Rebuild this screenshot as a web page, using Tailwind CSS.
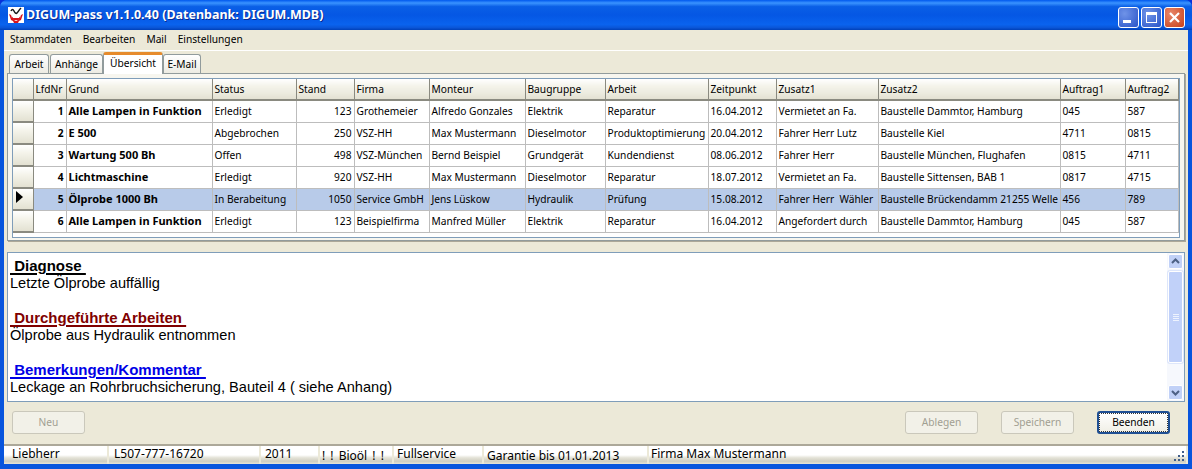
<!DOCTYPE html>
<html lang="de">
<head>
<meta charset="UTF-8" />
<title>DIGUM-pass</title>
<script src="https://cdn.jsdelivr.net/npm/@tailwindcss/browser@4"></script>
</head>
<body class="overflow-hidden bg-[#0831d9]">
  <!-- Fenster -->
  <div class="w-[1192px] h-[469px] flex flex-col bg-[#0855dd] font-['Noto_Sans','Liberation_Sans',sans-serif] text-[10.2px] text-black rounded-t-[7px] overflow-hidden">

    <!-- Titelleiste -->
    <div class="h-[30px] shrink-0 flex items-center pl-[8px] pr-[7px] bg-[linear-gradient(180deg,#0058ee_0%,#3a93ff_10%,#0a5fe6_22%,#0557e4_50%,#0a63ee_82%,#0a56d8_92%,#0040b8_100%)]">
      <svg width="16" height="16" viewBox="0 0 16 16" class="shrink-0">
        <rect width="16" height="16" fill="#fff"/>
        <path d="M1 7l2 1 0 2 2 1 1 2 2 1 2-1 1-2 2-1 0-2 2-1-1 3-1 3-2 1-1 2H6l-1-2-2-1-1-3z" fill="#d8141c"/>
        <path d="M3 8l2 3h6l2-3-1 4-2 1H6l-2-1z" fill="#d8141c"/>
        <path d="M3 4c1-2 2-2 3 0s2 3 3 2 2-3 4-5" stroke="#1a1a1a" stroke-width="1.5" fill="none"/>
      </svg>
      <span class="ml-[2px] font-bold text-[12.5px] text-white [text-shadow:1px_1px_0_#0a2a90]">DIGUM-pass v1.1.0.40 (Datenbank: DIGUM.MDB)</span>
      <div class="ml-auto mt-[5px] flex gap-[2px]">
        <div class="w-[21px] h-[21px] rounded-[3px] border border-white bg-[radial-gradient(circle_at_30%_30%,#6f93e8,#2a55c8)] relative">
          <div class="absolute left-[4px] bottom-[4px] w-[8px] h-[3px] bg-white"></div>
        </div>
        <div class="w-[21px] h-[21px] rounded-[3px] border border-white bg-[radial-gradient(circle_at_30%_30%,#6f93e8,#2a55c8)] flex items-center justify-center">
          <div class="w-[11px] h-[11px] border border-white border-t-[3px]"></div>
        </div>
        <div class="w-[21px] h-[21px] rounded-[3px] border border-white bg-[radial-gradient(circle_at_30%_30%,#e8876a,#c8401a)] flex items-center justify-center">
          <svg width="13" height="13" viewBox="0 0 13 13"><path d="M2 2l9 9M11 2l-9 9" stroke="#fff" stroke-width="2.2"/></svg>
        </div>
      </div>
    </div>

    <!-- Inhalt -->
    <div class="flex-1 min-h-0 mx-[4px] flex flex-col bg-[#ece9d8]">
      <!-- Menü -->
      <div class="h-[20px] shrink-0 flex items-center gap-[11px] pl-[6px] border-b border-white box-content">
        <span>Stammdaten</span><span>Bearbeiten</span><span>Mail</span><span>Einstellungen</span>
      </div>

      <!-- Tabs -->
      <div class="h-[22px] shrink-0 flex items-end pl-[5px] gap-[1px]">
        <div class="h-[19px] w-[40px] pt-[2px] flex items-center justify-center border border-b-0 border-[#919b9c] rounded-t-[3px] bg-[linear-gradient(180deg,#fff,#ecebe3)]">Arbeit</div>
        <div class="h-[19px] w-[53px] pt-[2px] flex items-center justify-center border border-b-0 border-[#919b9c] rounded-t-[3px] bg-[linear-gradient(180deg,#fff,#ecebe3)]">Anhänge</div>
        <div class="h-[22px] w-[60px] -ml-[1px] pb-[2px] flex items-center justify-center border-x border-[#919b9c] border-t-[3px] border-t-[#e68b2c] rounded-t-[3px] bg-white relative z-10 -mb-[1px]">Übersicht</div>
        <div class="h-[19px] w-[38px] -ml-[1px] pt-[2px] flex items-center justify-center border border-b-0 border-[#919b9c] rounded-t-[3px] bg-[linear-gradient(180deg,#fff,#ecebe3)]">E-Mail</div>
      </div>

      <!-- Tab-Seite mit Tabelle -->
      <div class="h-[168px] shrink-0 mx-[3px] border border-[#919b9c] bg-[#f7f6ef] p-[4px] pb-[3px] shadow-[1px_1px_0_#aca899]">
        <div class="h-[160px] border border-[#7f9db9] bg-white overflow-hidden">
          <table class="table-fixed border-collapse w-[1165px] leading-[13px]">
            <colgroup>
              <col class="w-[20px]"><col class="w-[33px]"><col class="w-[146px]"><col class="w-[84px]"><col class="w-[58px]"><col class="w-[75px]"><col class="w-[96px]"><col class="w-[80px]"><col class="w-[103px]"><col class="w-[68px]"><col class="w-[102px]"><col class="w-[182px]"><col class="w-[65px]"><col class="w-[53px]">
            </colgroup>
            <thead id="kopf"></thead>
            <tbody id="zeilen"></tbody>
          </table>
        </div>
      </div>

      <!-- Textfeld mit Scrollbar -->
      <div class="h-[150px] shrink-0 mt-[11px] mx-[3px] border border-[#7f9db9] bg-white flex">
        <div class="flex-1 pl-[2px] pt-[4px] font-['Liberation_Sans',sans-serif] text-[14.6px] leading-[17px]">
          <div class="h-[18px] text-[15px] font-bold"><span class="underline decoration-2 underline-offset-2 whitespace-pre"> Diagnose </span></div>
          <div class="h-[34px]">Letzte Ölprobe auffällig</div>
          <div class="h-[18px] text-[15px] font-bold text-[#800000]"><span class="underline decoration-2 underline-offset-2 whitespace-pre"> Durchgeführte Arbeiten </span></div>
          <div class="h-[34px]">Ölprobe aus Hydraulik entnommen</div>
          <div class="h-[18px] text-[15px] font-bold text-[#0000e6]"><span class="underline decoration-2 underline-offset-2 whitespace-pre"> Bemerkungen/Kommentar </span></div>
          <div>Leckage an Rohrbruchsicherung, Bauteil 4 ( siehe Anhang)</div>
        </div>
        <div class="w-[17px] shrink-0 flex flex-col bg-[#f6f8fd] items-center">
          <div class="w-[15px] h-[15px] mt-[1px] rounded-[2px] border border-white bg-[#c1d1f7] flex items-center justify-center">
            <svg width="9" height="7" viewBox="0 0 9 7"><path d="M1 5l3.5-3.5L8 5" stroke="#4d6185" stroke-width="2" fill="none"/></svg>
          </div>
          <div class="w-[15px] h-[92px] mt-[2px] rounded-[2px] border border-white bg-[#c1d1f9] flex flex-col items-center justify-center gap-[1px] shadow-[0_0_0_1px_#dde6fb]">
            <div class="w-[6px] h-[1px] bg-[#eef3fe]"></div><div class="w-[6px] h-[1px] bg-[#eef3fe]"></div><div class="w-[6px] h-[1px] bg-[#eef3fe]"></div><div class="w-[6px] h-[1px] bg-[#eef3fe]"></div>
          </div>
          <div class="w-[15px] h-[15px] mt-auto mb-[1px] rounded-[2px] border border-white bg-[#c1d1f7] flex items-center justify-center">
            <svg width="9" height="7" viewBox="0 0 9 7"><path d="M1 2l3.5 3.5L8 2" stroke="#4d6185" stroke-width="2" fill="none"/></svg>
          </div>
        </div>
      </div>

      <!-- Schaltflächen -->
      <div class="flex-1 min-h-0 flex items-start pt-[9px] pl-[8px] pr-[18px] border-b-2 border-[#aca899]">
        <button class="w-[73px] h-[23px] rounded-[3px] border border-[#cac8bb] bg-[#f2f1e8] text-[#a19f92]">Neu</button>
        <button class="ml-auto w-[73px] h-[23px] rounded-[3px] border border-[#cac8bb] bg-[#f2f1e8] text-[#a19f92]">Ablegen</button>
        <button class="ml-[23px] w-[73px] h-[23px] rounded-[3px] border border-[#cac8bb] bg-[#f2f1e8] text-[#a19f92]">Speichern</button>
        <button class="ml-[23px] w-[73px] h-[23px] rounded-[3px] border-2 border-[#1f4f93] bg-[linear-gradient(180deg,#fff,#f0efe6)] outline-1 outline-dotted -outline-offset-3 outline-[#333]">Beenden</button>
      </div>

      <!-- Statusleiste -->
      <div class="h-[18px] shrink-0 flex relative">
        <div id="status" class="flex w-full bg-[#ece9d8] text-[12px] leading-[14px]"></div>
        <svg width="12" height="12" viewBox="0 0 12 12" class="absolute right-[3px] bottom-[2px]">
          <path d="M9 1h2v2H9zM5 5h2v2H5zM9 5h2v2H9zM1 9h2v2H1zM5 9h2v2H5zM9 9h2v2H9z" fill="#3f5d8a"/>
        </svg>
      </div>
    </div>
    <div class="h-[5px] shrink-0"></div>
  </div>

  <script>
    // Spaltenkopf
    const spalten = ['', 'LfdNr', 'Grund', 'Status', 'Stand', 'Firma', 'Monteur', 'Baugruppe', 'Arbeit', 'Zeitpunkt', 'Zusatz1', 'Zusatz2', 'Auftrag1', 'Auftrag2'];

    const daten = [
      ['1', 'Alle Lampen in Funktion', 'Erledigt', '123', 'Grothemeier', 'Alfredo Gonzales', 'Elektrik', 'Reparatur', '16.04.2012', 'Vermietet an Fa.', 'Baustelle Dammtor, Hamburg', '045', '587'],
      ['2', 'E 500', 'Abgebrochen', '250', 'VSZ-HH', 'Max Mustermann', 'Dieselmotor', 'Produktoptimierung', '20.04.2012', 'Fahrer Herr Lutz', 'Baustelle Kiel', '4711', '0815'],
      ['3', 'Wartung 500 Bh', 'Offen', '498', 'VSZ-München', 'Bernd Beispiel', 'Grundgerät', 'Kundendienst', '08.06.2012', 'Fahrer Herr', 'Baustelle München, Flughafen', '0815', '4711'],
      ['4', 'Lichtmaschine', 'Erledigt', '920', 'VSZ-HH', 'Max Mustermann', 'Dieselmotor', 'Reparatur', '18.07.2012', 'Vermietet an Fa.', 'Baustelle Sittensen, BAB 1', '0817', '4715'],
      ['5', 'Ölprobe 1000 Bh', 'In Berabeitung', '1050', 'Service GmbH', 'Jens Lüskow', 'Hydraulik', 'Prüfung', '15.08.2012', 'Fahrer Herr  Wähler', 'Baustelle Brückendamm 21255 Welle', '456', '789'],
      ['6', 'Alle Lampen in Funktion', 'Erledigt', '123', 'Beispielfirma', 'Manfred Müller', 'Elektrik', 'Reparatur', '16.04.2012', 'Angefordert durch', 'Baustelle Dammtor, Hamburg', '045', '587']
    ];

    const kopfZelle = 'h-[21px] p-0 pl-[2px] text-left font-normal border-r border-b-2 border-[#8a8a80] bg-[linear-gradient(180deg,#fff_0%,#f4f3ea_35%,#ecebdf_70%,#e3e1d2_100%)]';
    const zelle = 'h-[22px] p-0 px-[2px] overflow-hidden whitespace-pre border-r border-b border-[#bdbdbd]';
    const knopf = 'h-[22px] p-0 border-r border-b-2 border-[#8a8a80] bg-[linear-gradient(180deg,#fff_0%,#f4f3ea_40%,#e3e1d2_100%)]';
    const pfeil = '<svg width="7" height="12" viewBox="0 0 7 12" class="ml-[3px] -mt-[4px]"><path d="M0 0l7 6-7 6z" fill="#000"/></svg>';

    document.getElementById('kopf').innerHTML = '<tr>' + spalten.map(s => `<th class="${kopfZelle}">${s}</th>`).join('') + '</tr>';

    document.getElementById('zeilen').innerHTML = daten.map((d, i) => {
      const farbe = i === 4 ? 'bg-[#b8cbe9]' : 'bg-white';
      const zellen = d.map((w, k) => {
        let extra = '';
        if (k === 0) extra = ' text-right font-bold';
        if (k === 1) extra = ' font-bold text-[11px] pb-[1px]';
        if (k === 3) extra = ' text-right';
        return `<td class="${zelle} ${farbe}${extra}">${w}</td>`;
      }).join('');
      return `<tr><td class="${knopf}">${i === 4 ? pfeil : ''}</td>${zellen}</tr>`;
    }).join('');

    // Statusleiste
    const felder = [
      ['Liebherr', 'w-[103px] pl-[8px]', 'mt-[1px]'],
      ['L507-777-16720', 'w-[150px] pl-[5px]', 'mt-[1px]'],
      ['2011', 'w-[57px] pl-[4px]', 'mt-[1px]'],
      ['! ! Bioöl ! !', 'w-[72px] pl-[2px]', 'mt-[3px] [word-spacing:2px]'],
      ['Fullservice', 'w-[88px] pl-[3px]', 'mt-[1px]'],
      ['Garantie bis 01.01.2013', 'w-[163px] pl-[3px]', 'mt-[3px]'],
      ['Firma Max Mustermann', 'flex-1 pl-[2px]', 'mt-[1px]']
    ];
    document.getElementById('status').innerHTML = felder.map(f =>
      `<div class="${f[1]} h-full mr-[2px] bg-[linear-gradient(180deg,#fff_0%,#fff_50%,#e4e3d8_65%,#cfcdc0_85%,#e6e4d8_100%)]"><div class="${f[2]}">${f[0]}</div></div>`
    ).join('');
  </script>
</body>
</html>
